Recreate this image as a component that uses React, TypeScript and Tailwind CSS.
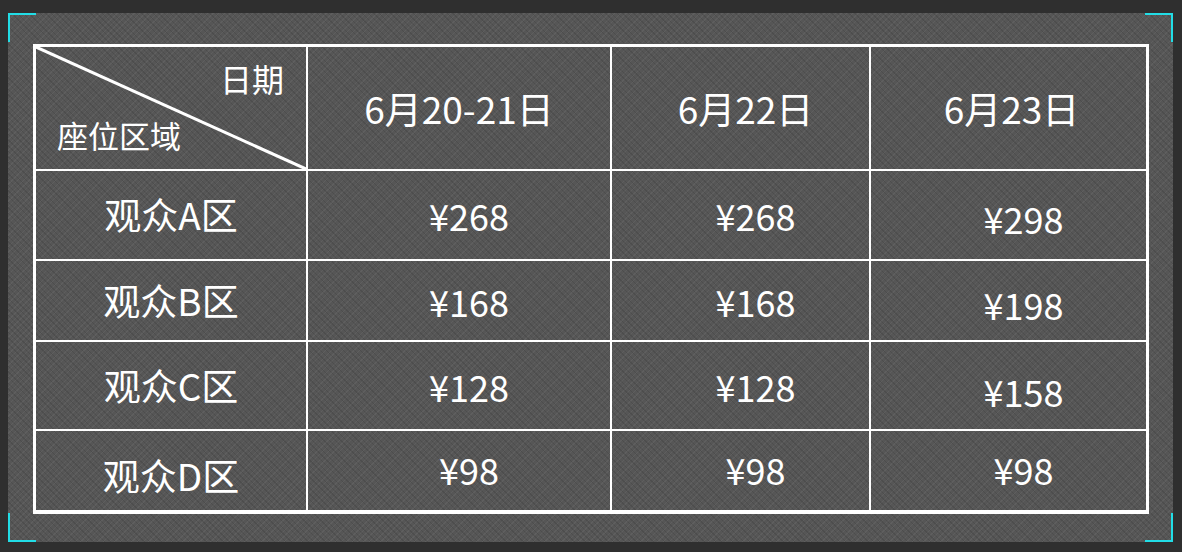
const texture =
  "bg-[#565656] bg-[repeating-linear-gradient(45deg,rgba(0,0,0,0.10)_0px,rgba(0,0,0,0.10)_1px,transparent_1px,transparent_4px),repeating-linear-gradient(-45deg,rgba(255,255,255,0.05)_0px,rgba(255,255,255,0.05)_1px,transparent_1px,transparent_4px)]";

const dates = ["6月20-21日", "6月22日", "6月23日"];
const dateShift = ["pl-0", "pl-[10px]", "pl-[6px]"];

const rows = [
  { zone: "观众A区", prices: ["¥268", "¥268", "¥298"] },
  { zone: "观众B区", prices: ["¥168", "¥168", "¥198"] },
  { zone: "观众C区", prices: ["¥128", "¥128", "¥158"] },
  { zone: "观众D区", prices: ["¥98", "¥98", "¥98"] },
];

// small per-column nudges so the prices sit where the poster put them
const priceShift = ["pl-[20px]", "pl-[30px]", "pl-[30px]"];
const lastColShift = ["pt-[6px]", "pt-[6px]", "pt-[10px]", "pb-[4px]"];

function Corner({ className }: { className: string }) {
  return <span className={`absolute h-[29px] w-[28px] border-[#22dde6] ${className}`} />;
}

export default function App() {
  return (
    <div
      className="h-[552px] w-[1182px] bg-[#2f2f2f] pb-[10px] pl-[8px] pr-[9px] pt-[13px] text-white"
      style={{ fontFamily: '"Noto Sans CJK SC", "Noto Sans", sans-serif' }}
    >
      <div className={`relative h-full pl-[25px] pt-[31px] ${texture}`}>
        <Corner className="left-0 top-0 border-l-2 border-t-2" />
        <Corner className="right-0 top-0 border-r-2 border-t-2" />
        <Corner className="bottom-0 left-0 w-[19px] border-b-2 border-l-2" />
        <Corner className="bottom-0 right-0 border-b-2 border-r-2" />

        <div className="grid h-[470px] w-[1116px] grid-cols-[270px_302px_257px_275px] grid-rows-[122px_88px_79px_87px_79px] gap-[2px] bg-white p-[3px]">
          <div className={`relative flex flex-col justify-between pb-[15px] pl-[21px] pr-[22px] pt-[12px] text-[31px] leading-[38px] ${texture}`}>
            <svg
              className="absolute inset-0"
              width="270"
              height="122"
              viewBox="0 0 270 122"
            >
              <line x1="0" y1="0" x2="270" y2="122" stroke="white" strokeWidth="3" />
            </svg>
            <span className="relative self-end text-[32px]">日期</span>
            <span className="relative self-start">座位区域</span>
          </div>
          {dates.map((d, i) => (
            <div
              key={d}
              className={`flex items-center justify-center pt-[1px] text-[37px] ${dateShift[i]} ${texture}`}
            >
              {d}
            </div>
          ))}

          {rows.map((r, ri) => (
            <>
              <div
                key={r.zone}
                className={`flex items-center justify-center text-[37px] ${ri === 3 ? "pt-[10px]" : ""} ${texture}`}
              >
                {r.zone}
              </div>
              {r.prices.map((p, ci) => (
                <div
                  key={r.zone + ci}
                  className={`flex items-center justify-center text-[36px] ${priceShift[ci]} ${ci === 2 ? lastColShift[ri] : ri === 3 ? "pb-[4px]" : ""} ${texture}`}
                >
                  {p}
                </div>
              ))}
            </>
          ))}
        </div>
      </div>
    </div>
  );
}
